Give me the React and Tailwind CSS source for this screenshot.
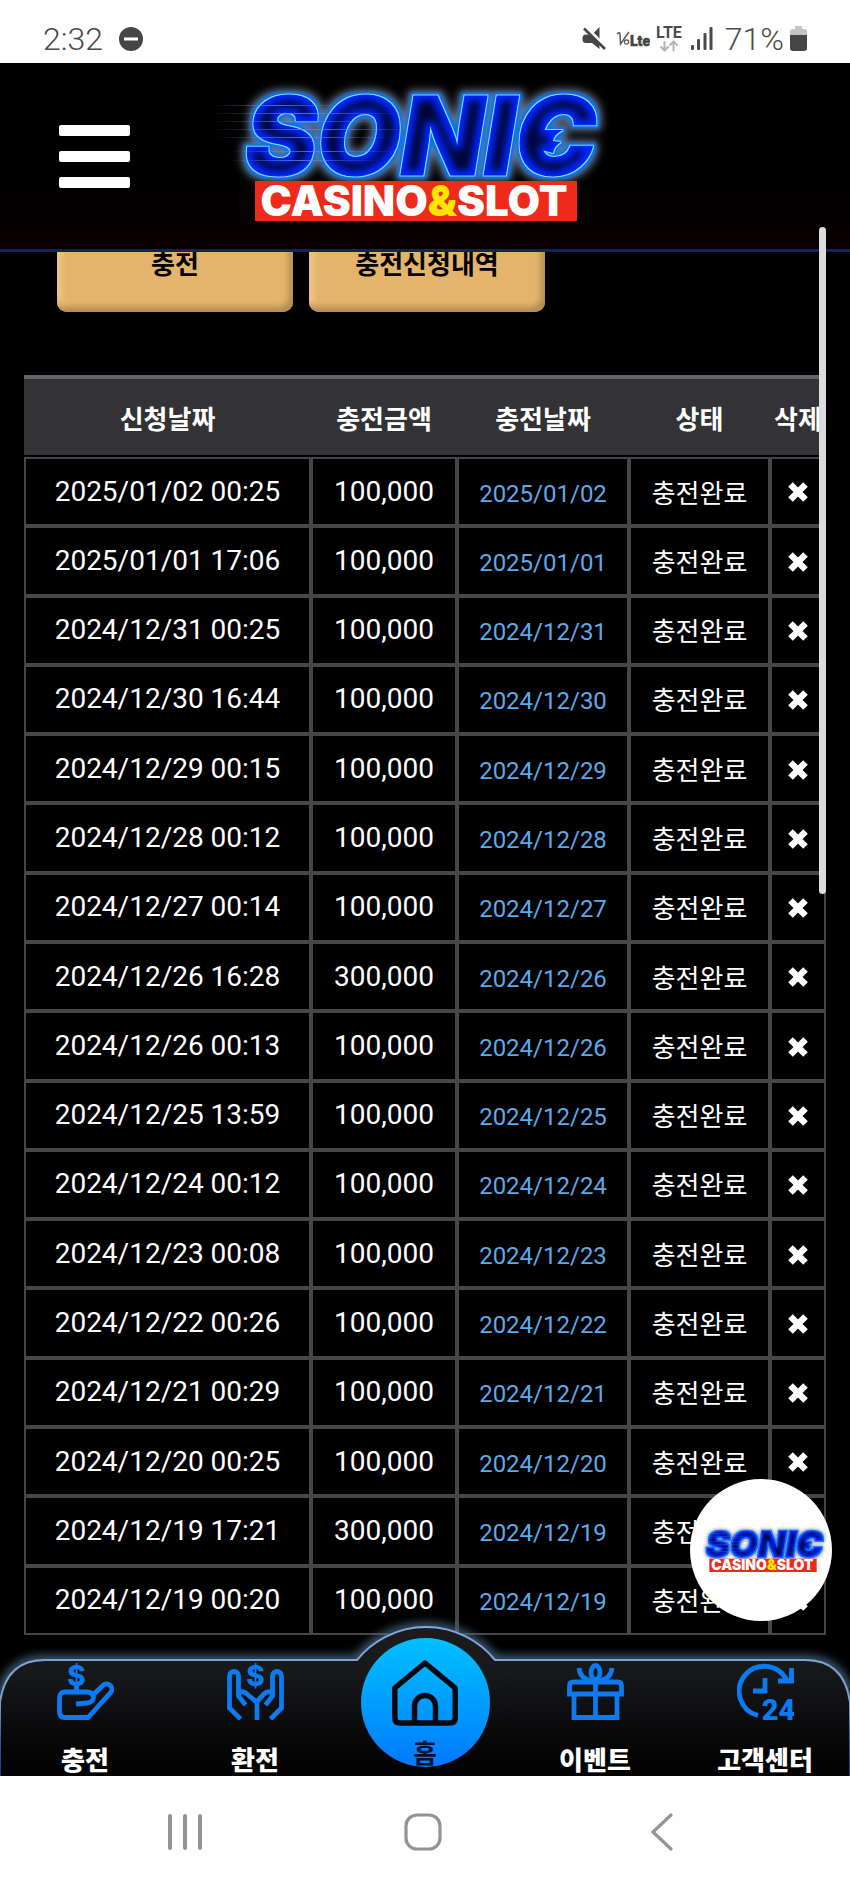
import React, { useId } from "react";

const ROWS = [
  ["2025/01/02 00:25", "100,000", "2025/01/02"],
  ["2025/01/01 17:06", "100,000", "2025/01/01"],
  ["2024/12/31 00:25", "100,000", "2024/12/31"],
  ["2024/12/30 16:44", "100,000", "2024/12/30"],
  ["2024/12/29 00:15", "100,000", "2024/12/29"],
  ["2024/12/28 00:12", "100,000", "2024/12/28"],
  ["2024/12/27 00:14", "100,000", "2024/12/27"],
  ["2024/12/26 16:28", "300,000", "2024/12/26"],
  ["2024/12/26 00:13", "100,000", "2024/12/26"],
  ["2024/12/25 13:59", "100,000", "2024/12/25"],
  ["2024/12/24 00:12", "100,000", "2024/12/24"],
  ["2024/12/23 00:08", "100,000", "2024/12/23"],
  ["2024/12/22 00:26", "100,000", "2024/12/22"],
  ["2024/12/21 00:29", "100,000", "2024/12/21"],
  ["2024/12/20 00:25", "100,000", "2024/12/20"],
  ["2024/12/19 17:21", "300,000", "2024/12/19"],
  ["2024/12/19 00:20", "100,000", "2024/12/19"],
];

function StatusBar() {
  return (
    <div className="flex h-[63px] items-center justify-between bg-[#fefefe] pt-3.5 pr-[43px] pl-[43px] text-[#4b4b4b]">
      <div className="flex items-center gap-4">
        <span className="text-[32px] leading-9 font-light">2:32</span>
        <svg viewBox="0 0 24 24" className="size-6" aria-hidden="true">
          <circle cx="12" cy="12" r="12" fill="#464646" />
          <rect x="5" y="10.5" width="14" height="3" fill="#fff" />
        </svg>
      </div>
      <div className="flex items-center">
        <svg viewBox="0 0 24 23" className="h-[23px] w-6" aria-hidden="true">
          <path d="M17.500 0v22L10 16H4q-3.500 0-3.500-3.500V11Q.5 7.500 4 7.500h6z" fill="#464646" />
          <path d="M2.500-1L25 22" stroke="#fefefe" strokeWidth="4" />
          <path d="M2 1.500L23 22" stroke="#464646" strokeWidth="2.500" />
        </svg>
        <svg viewBox="0 0 34 20" className="ml-2.5 h-5 w-[34px]" aria-hidden="true">
          <path d="M1 5q3-2.500 3 0L4.500 15 13 3" fill="none" stroke="#555" strokeWidth="1.400" />
          <circle cx="10.500" cy="13" r="2.200" fill="none" stroke="#555" strokeWidth="1.200" />
          <text x="14" y="16.500" fontSize="14" fontWeight="900" fill="#464646" stroke="#464646" strokeWidth="0.500" fontFamily="Roboto, sans-serif">Lte</text>
        </svg>
        <div className="ml-1.5 flex flex-col items-center">
          <span className="text-[16px] leading-[14px] font-bold">LTE</span>
          <svg viewBox="0 0 20 12" className="h-3 w-5" fill="none" stroke="#b5b5b5" strokeWidth="2" aria-hidden="true">
            <path d="M5.500 1v9M1.500 6.500l4 4 4-4M14.500 11.500V2M10.500 5.500l4-4 4 4" />
          </svg>
        </div>
        <svg viewBox="0 0 22 23" className="ml-[9px] h-[23px] w-[22px]" fill="#4b4b4b" aria-hidden="true">
          <rect x="0" y="18" width="3" height="5" rx="1" />
          <rect x="6" y="12" width="3" height="11" rx="1" />
          <rect x="12.500" y="6" width="3" height="17" rx="1" />
          <rect x="18.500" y="0" width="3" height="23" rx="1" />
        </svg>
        <span className="ml-3 text-[32px] leading-9 font-light">71%</span>
        <svg viewBox="0 0 17 25" className="ml-1.5 h-[25px] w-[17px]" aria-hidden="true">
          <path d="M5 0h7v3h2q3 0 3 3v4H0V6q0-3 3-3h2z" fill="#c4c4c4" />
          <path d="M0 9h17v13q0 3-3 3H3q-3 0-3-3z" fill="#464646" />
        </svg>
      </div>
    </div>
  );
}

function Logo({ className }) {
  const id = useId();
  return (
    <svg viewBox="0 0 420 150" className={className} role="img" aria-label="SONIC CASINO&SLOT">
      <defs>
        <filter id={id + "g"} x="-10%" y="-20%" width="120%" height="140%" colorInterpolationFilters="sRGB">
          <feMorphology in="SourceAlpha" operator="erode" radius="5" result="core" />
          <feGaussianBlur in="core" stdDeviation="3.500" result="coreBlur" />
          <feFlood floodColor="#00042e" floodOpacity="0.95" />
          <feComposite in2="coreBlur" operator="in" result="dark" />
          <feComposite in="dark" in2="SourceAlpha" operator="in" result="inner" />
          <feMorphology in="SourceAlpha" operator="dilate" radius="1" result="d1" />
          <feFlood floodColor="#7fdcff" />
          <feComposite in2="d1" operator="in" result="line" />
          <feMorphology in="SourceAlpha" operator="dilate" radius="3" result="d2" />
          <feGaussianBlur in="d2" stdDeviation="1.500" result="d2b" />
          <feFlood floodColor="#0872ee" />
          <feComposite in2="d2b" operator="in" result="blue" />
          <feMorphology in="SourceAlpha" operator="dilate" radius="5" result="d3" />
          <feGaussianBlur in="d3" stdDeviation="4" result="d3b" />
          <feFlood floodColor="#8593b4" floodOpacity="0.8" />
          <feComposite in2="d3b" operator="in" result="haze" />
          <feMerge>
            <feMergeNode in="haze" />
            <feMergeNode in="blue" />
            <feMergeNode in="line" />
            <feMergeNode in="SourceGraphic" />
            <feMergeNode in="inner" />
          </feMerge>
        </filter>
        <linearGradient id={id + "l"} x1="0" x2="1">
          <stop offset="0" stopColor="#7a8cc8" stopOpacity="0" />
          <stop offset="0.5" stopColor="#6a80d0" stopOpacity="0.8" />
          <stop offset="1" stopColor="#6a80d0" stopOpacity="0" />
        </linearGradient>
      </defs>
      <g filter={`url(#${id}g)`} fill="#0226ff">
        <text x="45" y="95" fontFamily="Inter, sans-serif" fontWeight="900" fontStyle="italic" fontSize="108" stroke="#0226ff" strokeWidth="1">
          SONIC
        </text>
        <path d="M342 50L363 50Q354 54 353 61L361 62Q354 66 353 73L342 70Z" />
      </g>
      <g fill={`url(#${id}l)`}>
        <rect x="15" y="25" width="130" height="1" />
        <rect x="10" y="33" width="190" height="1" />
        <rect x="12" y="41" width="170" height="1" />
        <rect x="10" y="49" width="210" height="1" />
        <rect x="15" y="57" width="180" height="1" />
        <rect x="30" y="71" width="170" height="1" />
        <rect x="28" y="80" width="150" height="1" />
      </g>
      <rect x="55" y="101" width="322" height="40" fill="#ee2a1b" />
      <text x="214" y="136" textAnchor="middle" fontFamily="Inter, sans-serif" fontWeight="900" fontSize="42" fill="#fff">
        CASINO<tspan fill="#ffe600">&amp;</tspan>SLOT
      </text>
    </svg>
  );
}

function Header() {
  return (
    <header className="flex h-[189px] items-start gap-[70px] border-b-3 border-[#14235c] bg-linear-to-b from-black from-40% to-[#0b0001] pt-[17px] pl-[59px]">
      <button type="button" aria-label="menu" className="mt-[45px] flex w-[71px] flex-col gap-[15px]">
        <span className="h-[11px] w-full rounded-xs bg-white" />
        <span className="h-[11px] w-full rounded-xs bg-white" />
        <span className="h-[11px] w-full rounded-xs bg-white" />
      </button>
      <Logo className="w-[420px] shrink-0" />
    </header>
  );
}

function Tab({ children }) {
  return (
    <button
      type="button"
      className="h-24 w-[236px] rounded-[10px] bg-[#e5b46c] pt-0.5 text-[26px] font-bold text-black shadow-[inset_-4px_-5px_6px_#b08c50,inset_4px_4px_6px_#f0cb92]"
    >
      {children}
    </button>
  );
}

const CELL = "border-2 border-[#464648] p-0 text-center align-middle";

function HistoryTable() {
  return (
    <table className="h-[1260px] w-full table-fixed border-separate border-spacing-0 text-white">
      <colgroup>
        <col className="w-[287px]" />
        <col className="w-[146px]" />
        <col className="w-[172px]" />
        <col className="w-[141px]" />
        <col className="w-[56px]" />
      </colgroup>
      <thead>
        <tr className="h-[82px] text-[26px] whitespace-nowrap">
          {["신청날짜", "충전금액", "충전날짜", "상태", "삭제"].map((h) => (
            <th key={h} scope="col" className="border-t-4 border-b-2 border-t-[#666668] border-b-black bg-[#333335] p-0 pt-1.5 font-bold">
              {h}
            </th>
          ))}
        </tr>
      </thead>
      <tbody>
        {ROWS.map(([requested, amount, charged]) => (
          <tr key={requested}>
            <td className={`${CELL} text-[28px] leading-9`}>{requested}</td>
            <td className={`${CELL} text-[28px] leading-9`}>{amount}</td>
            <td className={`${CELL} pt-1 text-[24px] leading-9 text-[#5fa9e6]`}>{charged}</td>
            <td className={`${CELL} pt-1 text-[26px] leading-9`}>충전완료</td>
            <td className={CELL}>
              <button type="button" aria-label="삭제" className="align-middle">
                <svg viewBox="0 0 20 20" className="size-5" stroke="#fff" strokeWidth="6.500" aria-hidden="true">
                  <path d="M2.500 2.500l15 15M17.500 2.500l-15 15" />
                </svg>
              </button>
            </td>
          </tr>
        ))}
      </tbody>
    </table>
  );
}

function NavIcon({ children }) {
  return (
    <svg viewBox="0 0 57 57" className="size-[57px] shrink-0" fill="none" stroke="#0c7bf2" strokeWidth="4.800" aria-hidden="true">
      {children}
    </svg>
  );
}

function DollarMark({ x }) {
  return (
    <text x={x} y="22.500" textAnchor="middle" fontSize="28" fontWeight="800" fontFamily="Inter, sans-serif" fill="#0c7bf2" stroke="none">
      $
    </text>
  );
}

function NavItem({ icon, label }) {
  return (
    <a href="#" className="flex flex-1 flex-col items-center gap-[27px] pt-[3px] whitespace-nowrap">
      {icon}
      <span className="text-[26px] leading-7 font-black text-white">{label}</span>
    </a>
  );
}

function BottomNav() {
  return (
    <nav className="relative flex h-[116px] overflow-x-clip">
      <svg viewBox="0 0 850 166" preserveAspectRatio="none" className="absolute bottom-0 left-0 h-[166px] w-full" aria-hidden="true">
        <defs>
          <linearGradient id="navfill" x1="0" y1="0" x2="0" y2="1">
            <stop offset="0" stopColor="#1c1c1e" />
            <stop offset="0.3" stopColor="#17181a" />
            <stop offset="0.8" stopColor="#050506" />
            <stop offset="1" stopColor="#040203" />
          </linearGradient>
          <linearGradient id="navline" x1="0" y1="0" x2="0" y2="1">
            <stop offset="0" stopColor="#7fa8e0" />
            <stop offset="0.5" stopColor="#7d9cc8" />
            <stop offset="0.75" stopColor="#2a5aa8" />
            <stop offset="1" stopColor="#123a80" />
          </linearGradient>
          <filter id="navglow" x="-5%" y="-20%" width="110%" height="140%">
            <feGaussianBlur stdDeviation="5" />
          </filter>
        </defs>
        <path d="M0 170V92Q6 50 45 50H357A88.600 88.600 0 0 1 495 50H805Q844 50 850 92V170" fill="none" stroke="#4a6c88" strokeWidth="8" filter="url(#navglow)" />
        <path d="M0 170V92Q6 50 45 50H357A88.600 88.600 0 0 1 495 50H805Q844 50 850 92V170" fill="url(#navfill)" stroke="url(#navline)" strokeWidth="2" />
      </svg>
      <div className="relative flex w-full">
        <NavItem
          label="충전"
          icon={
            <NavIcon>
              <path d="M30 29H8q-5.500 0-5.500 5.500V49q0 5.500 5.500 5.500H31L53.300 30a5.300 5.300 0 0 0-7.500-7.500L36 32" />
              <path d="M30 29q6 0 6.500 5.500Q36 39 30 40L19 41" />
              <path d="M19.500 22v6" />
              <DollarMark x="19.500" />
            </NavIcon>
          }
        />
        <NavItem
          label="환전"
          icon={
            <NavIcon>
              <path d="M13.500 56L2.500 45V13a4.500 4.500 0 0 1 9 0V33l7 9" />
              <path d="M43.500 56l11-11V13a4.500 4.500 0 0 0-9 0V33l-7 9" />
              <path d="M12 30q4-3 8 1l10 8.500V57M45 30q-4-3-8 1l-8 8.500" />
              <DollarMark x="28.500" />
            </NavIcon>
          }
        />
        <a href="#" className="flex flex-1 flex-col items-center">
          <span className="-mt-[22px] flex size-[129px] flex-col items-center rounded-full bg-linear-to-b from-[#00c0ff] to-[#0078ff]">
            <svg viewBox="0 0 66 66" className="mt-[22px] size-[66px] shrink-0" fill="none" stroke="#04080f" strokeWidth="5.500" aria-hidden="true">
              <path d="M2.800 28L33 3l30.200 25V58q0 5-5 5H7.800q-5 0-5-5z" strokeLinejoin="round" />
              <path d="M22.500 63V46a10.500 10.500 0 0 1 21 0V63" />
            </svg>
            <span className="mt-2.5 text-[26px] leading-9 font-bold text-[#02102c]">홈</span>
          </span>
        </a>
        <NavItem
          label="이벤트"
          icon={
            <NavIcon>
              <path d="M2.500 31V23q0-4 4-4H50.500q4 0 4 4V31z" />
              <path d="M7 33V54.500H50V33M28.500 19V54" />
              <ellipse cx="28.500" cy="9.500" rx="4.500" ry="7" />
              <path d="M12 5q1 11 13 13M45 5q-1 11-13 13" />
            </NavIcon>
          }
        />
        <NavItem
          label="고객센터"
          icon={
            <NavIcon>
              <path d="M21 52.500A25 25 0 1 1 49.500 17" />
              <path d="M54.500 5V18H41M28 15V28H16" />
              <path d="M47 20l10-11v11z" fill="#0c7bf2" stroke="none" />
              <text x="41.500" y="57" textAnchor="middle" fontSize="29" fontWeight="900" fontFamily="Roboto, sans-serif" fill="#0c7bf2" stroke="none">24</text>
            </NavIcon>
          }
        />
      </div>
    </nav>
  );
}

function SystemNav() {
  return (
    <div className="flex h-[113px] items-center justify-center gap-[198px] bg-[#fefefe] pr-1 pb-0.5">
      <button type="button" aria-label="recent apps">
        <svg viewBox="0 0 40 40" className="size-10" stroke="#949296" strokeWidth="4" strokeLinecap="round">
          <path d="M5 4v32M20 4v32M35 4v32" />
        </svg>
      </button>
      <button type="button" aria-label="home">
        <svg viewBox="0 0 40 40" className="size-10" fill="none" stroke="#949296" strokeWidth="3.200">
          <rect x="3" y="3" width="34" height="34" rx="11" />
        </svg>
      </button>
      <button type="button" aria-label="back">
        <svg viewBox="0 0 40 40" className="size-10" fill="none" stroke="#949296" strokeWidth="3.200" strokeLinecap="round">
          <path d="M30 3L12 20l18 17" />
        </svg>
      </button>
    </div>
  );
}

export default function App() {
  return (
    <div className="relative flex min-h-screen flex-col bg-black font-[Roboto,'Noto_Sans_CJK_KR',sans-serif]">
      <StatusBar />
      <Header />
      <main className="relative grow">
        <div className="overflow-hidden">
          <div className="-mt-9 flex gap-4 pl-[57px]">
            <Tab>충전</Tab>
            <Tab>충전신청내역</Tab>
          </div>
        </div>
        <div className="px-6 pt-[63px] pb-[25px]">
          <HistoryTable />
        </div>
        <button type="button" className="absolute right-[18px] bottom-[39px] flex size-[142px] items-center justify-center rounded-full bg-white">
          <Logo className="w-[140px]" />
        </button>
      </main>
      <BottomNav />
      <SystemNav />
      <div className="absolute top-[227px] right-6 h-[667px] w-[7px] rounded-full bg-[#dcdcdf]" />
    </div>
  );
}
